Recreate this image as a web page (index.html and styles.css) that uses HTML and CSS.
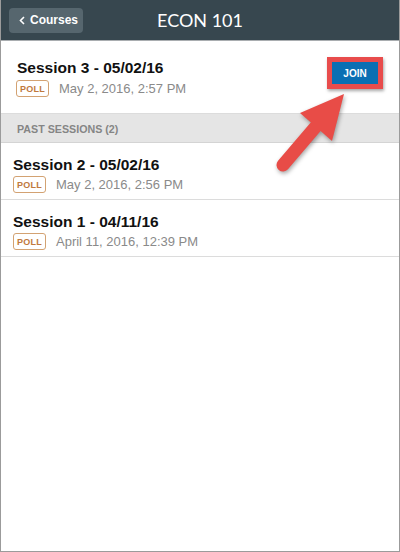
FILE: index.html
```html
<!DOCTYPE html>
<html>
<head>
<meta charset="utf-8">
<link rel="stylesheet" href="styles.css">
</head>
<body>
<div class="frame">
  <header class="topbar">
    <div class="left">
      <button class="back"><svg class="chev" width="6" height="9" viewBox="0 0 6 9"><path d="M5 1 L1.5 4.5 L5 8" fill="none" stroke="#fff" stroke-width="1.6"/></svg>Courses</button>
    </div>
    <div class="title">ECON 101</div>
    <div class="right"></div>
  </header>

  <div class="row current">
    <div class="info">
      <div class="name">Session 3 - 05/02/16</div>
      <div class="meta"><span class="badge">POLL</span><span class="date">May 2, 2016, 2:57 PM</span></div>
    </div>
    <div class="highlight"><button class="join">JOIN</button></div>
  </div>

  <div class="section">PAST SESSIONS (2)</div>

  <div class="row past">
    <div class="info">
      <div class="name">Session 2 - 05/02/16</div>
      <div class="meta"><span class="badge">POLL</span><span class="date">May 2, 2016, 2:56 PM</span></div>
    </div>
  </div>
  <div class="row past">
    <div class="info">
      <div class="name">Session 1 - 04/11/16</div>
      <div class="meta"><span class="badge">POLL</span><span class="date">April 11, 2016, 12:39 PM</span></div>
    </div>
  </div>

  <svg class="arrow" width="400" height="552" viewBox="0 0 400 552">
    <line x1="283" y1="165" x2="318" y2="124" stroke="#e84c47" stroke-width="13" stroke-linecap="round"/>
    <polygon points="344,94 300,113 332,141" fill="#e84c47"/>
  </svg>
</div>
</body>
</html>
```
FILE: styles.css
```css
* { box-sizing: border-box; }
html, body { margin: 0; padding: 0; }
body { width: 400px; height: 552px; font-family: "Liberation Sans", Arial, sans-serif; background: #fff; }
.frame {
  position: relative;
  width: 400px;
  height: 552px;
  border: 1px solid #9b9b9b;
  border-top: none;
  overflow: hidden;
}
.topbar {
  height: 41px;
  background: #37474f;
  border-bottom: 1px solid #a9adb0;
  display: grid;
  grid-template-columns: 1fr auto 1fr;
  align-items: center;
  margin: 0 -1px;
}
.left { padding-left: 9px; }
.back {
  display: flex;
  align-items: center;
  gap: 5px;
  height: 25px;
  width: 74px;
  padding: 0 0 0 10px;
  border: none;
  border-radius: 4px;
  background: #56666e;
  color: #fff;
  font-family: "Liberation Sans", Arial, sans-serif;
  font-weight: bold;
  font-size: 12px;
}
.chev { display: block; }
.title {
  color: #fff;
  font-family: Lato, "Open Sans", sans-serif;
  font-size: 18px;
  padding-bottom: 1px;
}
.row {
  display: flex;
  align-items: flex-start;
  justify-content: space-between;
  border-bottom: 1px solid #dcdcdc;
}
.row.current { padding: 18px 16px 16px 15px; }
.row.past { padding: 13px 12px 6px 12px; }
.name {
  font-size: 15.5px;
  line-height: 18px;
  font-weight: bold;
  color: #111;
}
.meta { display: flex; align-items: center; margin-top: 2px; }
.row.current .meta { margin-top: 3px; }
.row.current .name { padding-left: 1px; }
.badge {
  display: inline-flex;
  align-items: center;
  justify-content: center;
  width: 33px;
  height: 17px;
  border: 1px solid #d3a272;
  border-radius: 3px;
  color: #c0793d;
  font-size: 9px;
  font-weight: bold;
  letter-spacing: 0.2px;
}
.date {
  margin-left: 10px;
  font-size: 13px;
  color: #8a8a8a;
}
.highlight {
  margin-top: -2px;
  border: 5px solid #e84c4c;
  box-shadow: 1px 2px 3px rgba(0,0,0,0.35);
}
.join {
  display: block;
  width: 46px;
  height: 22px;
  border: none;
  background: #0a6fb3;
  color: #fff;
  font-family: "Liberation Sans", Arial, sans-serif;
  font-weight: bold;
  font-size: 10px;
  padding: 0;
}
.section {
  height: 29px;
  background: #e5e5e5;
  border-bottom: 1px solid #d4d4d4;
  padding: 9px 16px 0;
  font-size: 10.7px;
  font-weight: bold;
  color: #858585;
}
.arrow {
  position: absolute;
  left: -1px;
  top: 0;
  pointer-events: none;
  filter: drop-shadow(1px 2px 2px rgba(0,0,0,0.35));
}
```
